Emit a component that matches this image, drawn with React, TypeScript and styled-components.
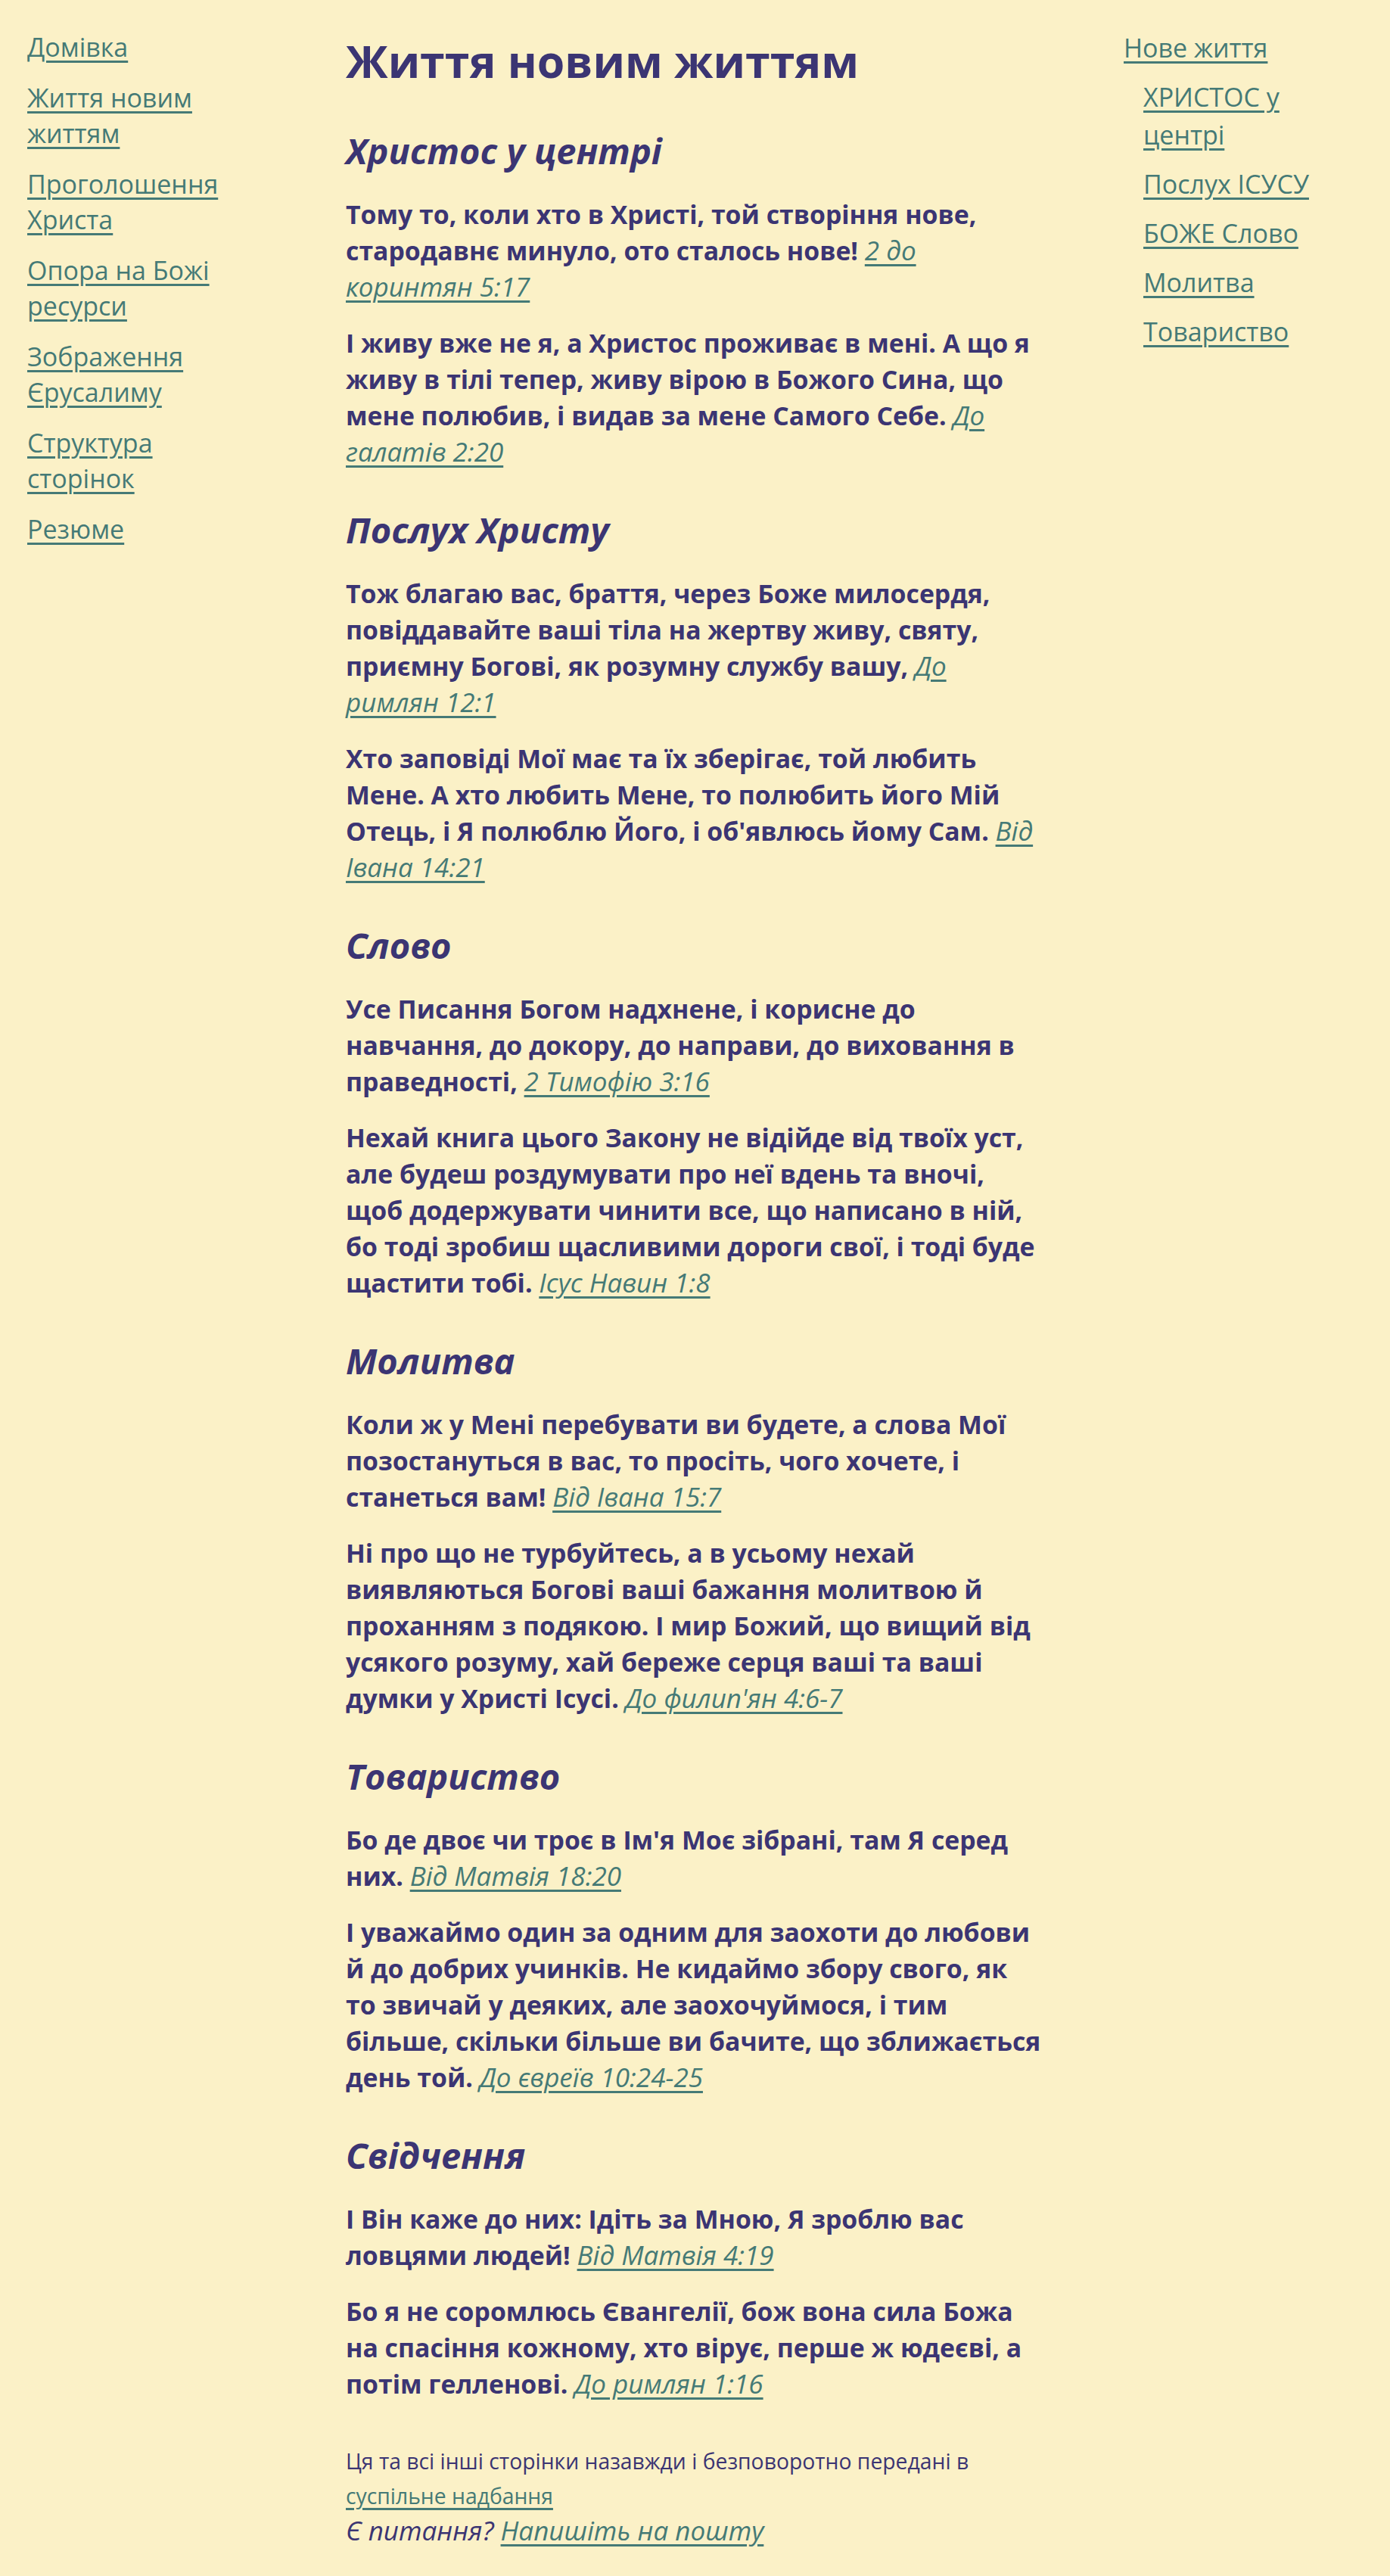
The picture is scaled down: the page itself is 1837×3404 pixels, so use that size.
import React from "react";
import styled, { createGlobalStyle } from "styled-components";

const GlobalStyle = createGlobalStyle`
  html, body {
    margin: 0;
    padding: 0;
    background: #fbf1c7;
  }
  body {
    font-family: "Open Sans", "Noto Sans", sans-serif;
    color: #3b3573;
  }
`;

const Page = styled.div`
  display: grid;
  grid-template-columns: 316px 923px 316px;
  justify-content: space-between;
  padding: 0 36px;
  min-height: 3404px;
  box-sizing: border-box;
`;

const Link = styled.a`
  color: #457a76;
  text-decoration: underline;
  text-decoration-thickness: 3px;
  text-underline-offset: 5px;
`;

const SideList = styled.ul<{ $top: number; $lh: number; $gap: number; $indent?: number }>`
  list-style: none;
  margin: ${(p) => p.$top}px 0 0;
  padding: 0 0 0 ${(p) => p.$indent ?? 0}px;
  font-size: 34px;
  line-height: ${(p) => p.$lh}px;
  display: flex;
  flex-direction: column;
  gap: ${(p) => p.$gap}px;
`;

const SideItem = styled.li``;

const Main = styled.main`
  padding: 45px 1px 0 0;
`;

const Title = styled.h1`
  margin: 0 0 60px;
  font-size: 59px;
  line-height: 70px;
  font-weight: 700;
`;

const Section = styled.section`
  & + & {
    margin-top: 55px;
  }
`;

const SectionTitle = styled.h2`
  margin: 0 0 35px;
  font-size: 47px;
  line-height: 49px;
  font-weight: 700;
  font-style: italic;
`;

const Verse = styled.p`
  margin: 0;
  font-size: 33.8px;
  line-height: 48px;
  font-weight: 700;
  & + & {
    margin-top: 26px;
  }
`;

const Ref = styled(Link)`
  font-style: italic;
  font-weight: 400;
  font-size: 35px;
`;

const Footer = styled.footer`
  margin-top: 55px;
`;

const Notice = styled.p`
  margin: 0;
  font-size: 28.3px;
  line-height: 46px;
`;

const Question = styled.p`
  margin: 0;
  font-size: 35px;
  line-height: 46px;
  font-style: italic;
`;

type V = { text: string; ref: string };
const sections: { title: string; verses: V[] }[] = [
  {
    title: "Христос у центрі",
    verses: [
      { text: "Тому то, коли хто в Христі, той створіння нове, стародавнє минуло, ото сталось нове!", ref: "2 до коринтян 5:17" },
      { text: "І живу вже не я, а Христос проживає в мені. А що я живу в тілі тепер, живу вірою в Божого Сина, що мене полюбив, і видав за мене Самого Себе.", ref: "До галатів 2:20" },
    ],
  },
  {
    title: "Послух Христу",
    verses: [
      { text: "Тож благаю вас, браття, через Боже милосердя, повіддавайте ваші тіла на жертву живу, святу, приємну Богові, як розумну службу вашу,", ref: "До римлян 12:1" },
      { text: "Хто заповіді Мої має та їх зберігає, той любить Мене. А хто любить Мене, то полюбить його Мій Отець, і Я полюблю Його, і об'явлюсь йому Сам.", ref: "Від Івана 14:21" },
    ],
  },
  {
    title: "Слово",
    verses: [
      { text: "Усе Писання Богом надхнене, і корисне до навчання, до докору, до направи, до виховання в праведності,", ref: "2 Тимофію 3:16" },
      { text: "Нехай книга цього Закону не відійде від твоїх уст, але будеш роздумувати про неї вдень та вночі, щоб додержувати чинити все, що написано в ній, бо тоді зробиш щасливими дороги свої, і тоді буде щастити тобі.", ref: "Ісус Навин 1:8" },
    ],
  },
  {
    title: "Молитва",
    verses: [
      { text: "Коли ж у Мені перебувати ви будете, а слова Мої позостануться в вас, то просіть, чого хочете, і станеться вам!", ref: "Від Івана 15:7" },
      { text: "Ні про що не турбуйтесь, а в усьому нехай виявляються Богові ваші бажання молитвою й проханням з подякою. І мир Божий, що вищий від усякого розуму, хай береже серця ваші та ваші думки у Христі Ісусі.", ref: "До филип'ян 4:6-7" },
    ],
  },
  {
    title: "Товариство",
    verses: [
      { text: "Бо де двоє чи троє в Ім'я Моє зібрані, там Я серед них.", ref: "Від Матвія 18:20" },
      { text: "І уважаймо один за одним для заохоти до любови й до добрих учинків. Не кидаймо збору свого, як то звичай у деяких, але заохочуймося, і тим більше, скільки більше ви бачите, що зближається день той.", ref: "До євреїв 10:24-25" },
    ],
  },
  {
    title: "Свідчення",
    verses: [
      { text: "І Він каже до них: Ідіть за Мною, Я зроблю вас ловцями людей!", ref: "Від Матвія 4:19" },
      { text: "Бо я не соромлюсь Євангелії, бож вона сила Божа на спасіння кожному, хто вірує, перше ж юдеєві, а потім гелленові.", ref: "До римлян 1:16" },
    ],
  },
];

const leftNav = [
  "Домівка",
  "Життя новим життям",
  "Проголошення Христа",
  "Опора на Божі ресурси",
  "Зображення Єрусалиму",
  "Структура сторінок",
  "Резюме",
];

const rightNav = ["ХРИСТОС у центрі", "Послух ІСУСУ", "БОЖЕ Слово", "Молитва", "Товариство"];

export default function App() {
  return (
    <>
      <GlobalStyle />
      <Page>
        <nav>
          <SideList $top={39} $lh={47} $gap={20}>
            {leftNav.map((n) => (
              <SideItem key={n}>
                <Link href="#">{n}</Link>
              </SideItem>
            ))}
          </SideList>
        </nav>
        <Main>
          <Title>Життя новим життям</Title>
          {sections.map((s) => (
            <Section key={s.title}>
              <SectionTitle>{s.title}</SectionTitle>
              {s.verses.map((v) => (
                <Verse key={v.ref}>
                  {v.text} <Ref href="#">{v.ref}</Ref>
                </Verse>
              ))}
            </Section>
          ))}
          <Footer>
            <Notice>
              Ця та всі інші сторінки назавжди і безповоротно передані в{" "}
              <Link href="#">суспільне надбання</Link>
            </Notice>
            <Question>
              Є питання? <Link href="#">Напишіть на пошту</Link>
            </Question>
          </Footer>
        </Main>
        <nav>
          <SideList $top={38} $lh={50} $gap={15}>
            <SideItem>
              <Link href="#">Нове життя</Link>
              <SideList $top={15} $lh={50} $gap={15} $indent={26}>
                {rightNav.map((n) => (
                  <SideItem key={n}>
                    <Link href="#">{n}</Link>
                  </SideItem>
                ))}
              </SideList>
            </SideItem>
          </SideList>
        </nav>
      </Page>
    </>
  );
}
